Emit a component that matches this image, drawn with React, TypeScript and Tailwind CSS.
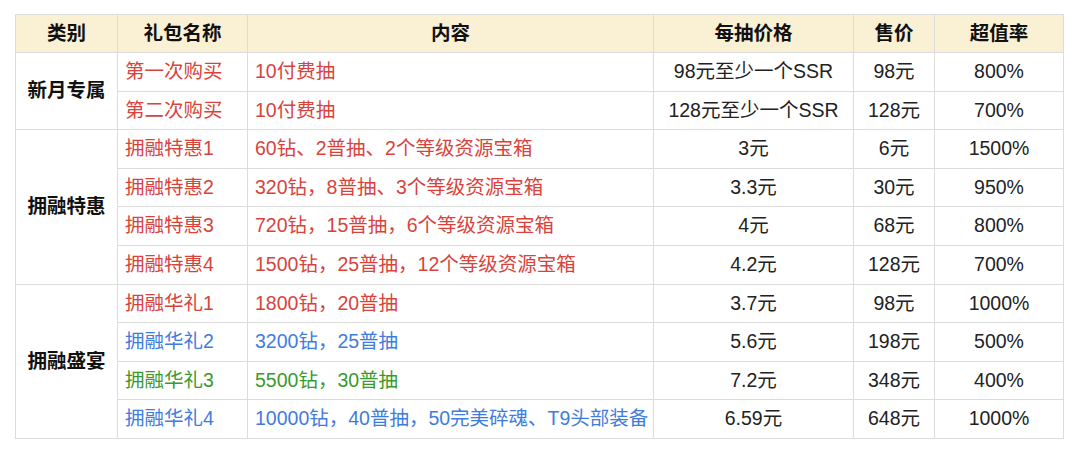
const RED = 'text-[#d8433c]'
const BLUE = 'text-[#3f7ce0]'
const GREEN = 'text-[#3a9a2c]'

type Row = { name: string; content: string; per: string; price: string; rate: string; color: string }

const GROUPS: { title: string; rows: Row[] }[] = [
  {
    title: '新月专属',
    rows: [
      { name: '第一次购买', content: '10付费抽', per: '98元至少一个SSR', price: '98元', rate: '800%', color: RED },
      { name: '第二次购买', content: '10付费抽', per: '128元至少一个SSR', price: '128元', rate: '700%', color: RED },
    ],
  },
  {
    title: '拥融特惠',
    rows: [
      { name: '拥融特惠1', content: '60钻、2普抽、2个等级资源宝箱', per: '3元', price: '6元', rate: '1500%', color: RED },
      { name: '拥融特惠2', content: '320钻，8普抽、3个等级资源宝箱', per: '3.3元', price: '30元', rate: '950%', color: RED },
      { name: '拥融特惠3', content: '720钻，15普抽，6个等级资源宝箱', per: '4元', price: '68元', rate: '800%', color: RED },
      { name: '拥融特惠4', content: '1500钻，25普抽，12个等级资源宝箱', per: '4.2元', price: '128元', rate: '700%', color: RED },
    ],
  },
  {
    title: '拥融盛宴',
    rows: [
      { name: '拥融华礼1', content: '1800钻，20普抽', per: '3.7元', price: '98元', rate: '1000%', color: RED },
      { name: '拥融华礼2', content: '3200钻，25普抽', per: '5.6元', price: '198元', rate: '500%', color: BLUE },
      { name: '拥融华礼3', content: '5500钻，30普抽', per: '7.2元', price: '348元', rate: '400%', color: GREEN },
      { name: '拥融华礼4', content: '10000钻，40普抽，50完美碎魂、T9头部装备', per: '6.59元', price: '648元', rate: '1000%', color: BLUE },
    ],
  },
]

const cell = 'border border-[#dcdcdc] px-[7px] leading-none'

export default function App() {
  return (
    <div className="w-[1080px] h-[453px] bg-white pt-[14px] pl-[15px] font-['Liberation_Sans','Noto_Sans_CJK_SC',sans-serif] text-[19.5px] text-[#222]">
      <table className="border-collapse table-fixed w-[1048px]">
        <colgroup>
          <col className="w-[102px]" />
          <col className="w-[130px]" />
          <col className="w-[406px]" />
          <col className="w-[200px]" />
          <col className="w-[81px]" />
          <col className="w-[129px]" />
        </colgroup>
        <thead>
          <tr className="h-[38px] bg-[#faf0d3] font-bold text-[#111]">
            <th className={`${cell} text-center`}>类别</th>
            <th className={`${cell} text-center`}>礼包名称</th>
            <th className={`${cell} text-center`}>内容</th>
            <th className={`${cell} text-center`}>每抽价格</th>
            <th className={`${cell} text-center`}>售价</th>
            <th className={`${cell} text-center`}>超值率</th>
          </tr>
        </thead>
        <tbody>
          {GROUPS.map(group =>
            group.rows.map((row, i) => (
              <tr key={row.name} className="h-[38.6px]">
                {i === 0 && (
                  <td rowSpan={group.rows.length} className={`${cell} text-center font-bold text-[#111]`}>
                    {group.title}
                  </td>
                )}
                <td className={`${cell} whitespace-nowrap ${row.color}`}>{row.name}</td>
                <td className={`${cell} whitespace-nowrap ${row.color}`}>{row.content}</td>
                <td className={`${cell} text-center whitespace-nowrap`}>{row.per}</td>
                <td className={`${cell} text-center whitespace-nowrap`}>{row.price}</td>
                <td className={`${cell} text-center whitespace-nowrap`}>{row.rate}</td>
              </tr>
            ))
          )}
        </tbody>
      </table>
    </div>
  )
}
